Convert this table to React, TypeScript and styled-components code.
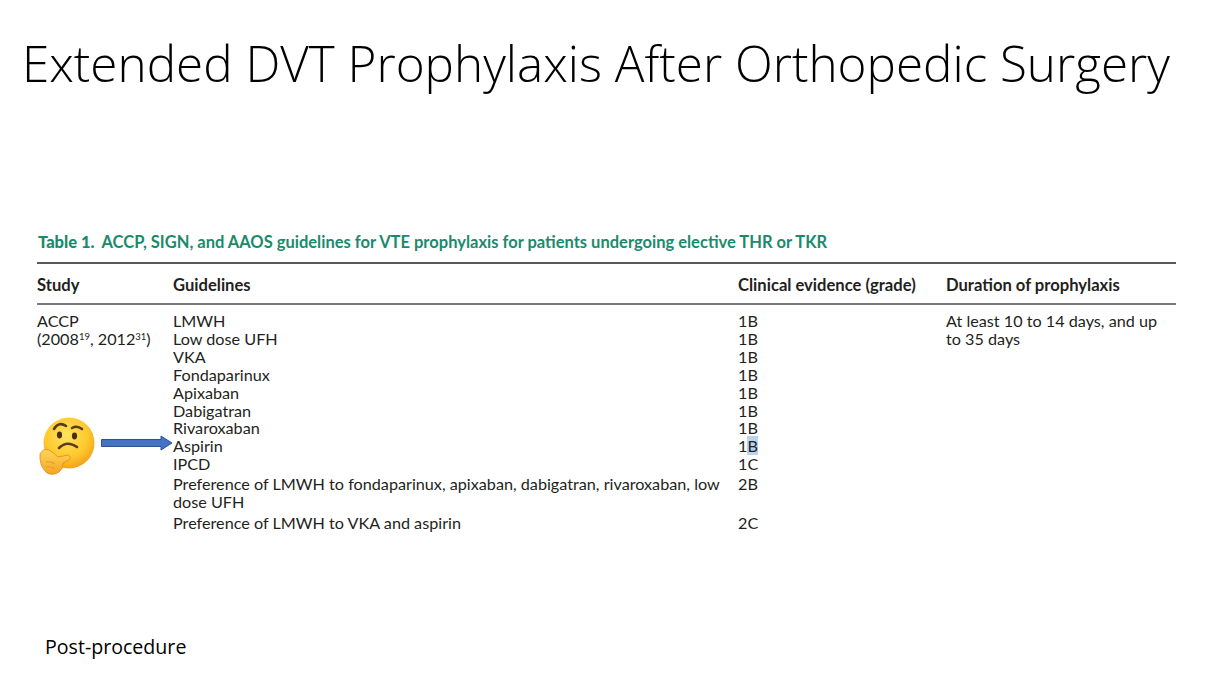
import React from "react";
import styled, { createGlobalStyle } from "styled-components";

const GlobalStyle = createGlobalStyle`
  html, body {
    margin: 0;
    padding: 0;
    background: #ffffff;
  }
`;

const Slide = styled.div`
  position: relative;
  width: 1210px;
  height: 681px;
  overflow: hidden;
  background: #ffffff;
  display: flex;
  flex-direction: column;
`;

const Title = styled.h1`
  margin: 33px 0 0 22px;
  font-family: "Open Sans", sans-serif;
  font-weight: 300;
  font-size: 49.4px;
  line-height: 60px;
  color: #000;
  white-space: nowrap;
`;

const TableBlock = styled.div`
  position: relative;
  margin: 139px 0 0 37px;
  width: 1139px;
  font-family: Lato, "Open Sans", sans-serif;
  color: #231f20;
`;

const Caption = styled.div`
  font-size: 16.5px;
  font-weight: 700;
  color: #1b8a6c;
  line-height: 20px;
  padding-left: 1px;
  margin-bottom: 10px;
  white-space: nowrap;
`;

const CaptionLabel = styled.span`
  font-weight: 900;
  margin-right: 7px;
`;

const Rule = styled.div<{ $color: string }>`
  height: 2px;
  background: ${(p) => p.$color};
`;

const Grid = styled.div`
  display: grid;
  grid-template-columns: 136px 565px 208px 1fr;
  font-size: 16.2px;
  line-height: 17.9px;
`;

const HeadCell = styled.div`
  font-weight: 700;
  font-size: 16.6px;
  line-height: 18px;
  padding: 12px 0 9px;
  white-space: nowrap;
`;

const Cell = styled.div<{ $col: number; $row: string; $gap?: number }>`
  grid-column: ${(p) => p.$col};
  grid-row: ${(p) => p.$row};
  padding-top: ${(p) => p.$gap ?? 0}px;
`;

const Body = styled(Grid)`
  padding-top: 7px;
`;

const Sup = styled.sup`
  font-size: 9.5px;
  vertical-align: 5px;
  line-height: 0;
`;

const Marker = styled.div`
  position: absolute;
  left: 0;
  top: 184px;
  display: flex;
  align-items: flex-start;
  gap: 4px;
`;

const ArrowBox = styled.div`
  margin-top: 19px;
  display: flex;
`;

const Footer = styled.div`
  margin: auto 0 21px 45px;
  font-family: "Open Sans", sans-serif;
  font-size: 19.6px;
  color: #000;
`;

const Picked = styled.span`
  background: #b9d3f0;
`;

const rows: { name: React.ReactNode; grade: React.ReactNode; gap?: number }[] = [
  { name: "LMWH", grade: "1B" },
  { name: "Low dose UFH", grade: "1B" },
  { name: "VKA", grade: "1B" },
  { name: "Fondaparinux", grade: "1B" },
  { name: "Apixaban", grade: "1B" },
  { name: "Dabigatran", grade: "1B" },
  { name: "Rivaroxaban", grade: "1B" },
  { name: "Aspirin", grade: <>1<Picked>B</Picked></> },
  { name: "IPCD", grade: "1C" },
  {
    name: "Preference of LMWH to fondaparinux, apixaban, dabigatran, rivaroxaban, low dose UFH",
    grade: "2B",
    gap: 2,
  },
  { name: "Preference of LMWH to VKA and aspirin", grade: "2C", gap: 3 },
];

const ThinkingFace = () => (
  <svg width="60" height="60" viewBox="0 0 60 60">
    <defs>
      <radialGradient id="face" cx="0.45" cy="0.35" r="0.7">
        <stop offset="0" stopColor="#ffe45c" />
        <stop offset="0.6" stopColor="#fdc92e" />
        <stop offset="1" stopColor="#f29b17" />
      </radialGradient>
      <linearGradient id="hand" x1="0" y1="0" x2="0" y2="1">
        <stop offset="0" stopColor="#ffd65a" />
        <stop offset="1" stopColor="#f5a524" />
      </linearGradient>
    </defs>
    <circle cx="32" cy="27" r="25.5" fill="url(#face)" />
    <path d="M17 13 Q22 5 29 10" stroke="#5b3a1e" strokeWidth="2.6" fill="none" strokeLinecap="round" />
    <path d="M35 12 Q40 9 45 13" stroke="#5b3a1e" strokeWidth="2.6" fill="none" strokeLinecap="round" />
    <ellipse cx="22.5" cy="19" rx="2.6" ry="3.4" fill="#4a2e17" />
    <ellipse cx="37.5" cy="20" rx="2.6" ry="3.4" fill="#4a2e17" />
    <path d="M22 32 Q30 24 40 31" stroke="#5b3a1e" strokeWidth="2.6" fill="none" strokeLinecap="round" />
    <path
      d="M3 38 Q2 50 10 57 Q16 60 22 56 Q27 52 26 47 L32 44 Q35 41 31 39 L21 41 Q16 36 12 34 Q6 32 3 38 Z"
      fill="url(#hand)"
      stroke="#e08a12"
      strokeWidth="0.8"
    />
    <path d="M9 46 Q14 45 18 48" stroke="#e99a24" strokeWidth="1.2" fill="none" />
    <path d="M9 51 Q14 50 18 53" stroke="#e99a24" strokeWidth="1.2" fill="none" />
  </svg>
);

const Arrow = () => (
  <svg width="72" height="16" viewBox="0 0 72 16">
    <path
      d="M0.5 4.5 H60 V1 L71 8 L60 15 V11.5 H0.5 Z"
      fill="#4472c4"
      stroke="#2f528f"
      strokeWidth="1"
    />
  </svg>
);

export default function App() {
  return (
    <Slide>
      <GlobalStyle />
      <Title>Extended DVT Prophylaxis After Orthopedic Surgery</Title>
      <TableBlock>
        <Caption>
          <CaptionLabel>Table 1.</CaptionLabel>ACCP, SIGN, and AAOS guidelines for VTE prophylaxis for patients
          undergoing elective THR or TKR
        </Caption>
        <Rule $color="#5a5a5a" />
        <Grid>
          <HeadCell>Study</HeadCell>
          <HeadCell>Guidelines</HeadCell>
          <HeadCell>Clinical evidence (grade)</HeadCell>
          <HeadCell>Duration of prophylaxis</HeadCell>
        </Grid>
        <Rule $color="#7a7a7a" />
        <Body>
          <Cell $col={1} $row="1 / span 2">
            ACCP
            <br />
            (2008<Sup>19</Sup>, 2012<Sup>31</Sup>)
          </Cell>
          {rows.map((r, i) => (
            <React.Fragment key={i}>
              <Cell $col={2} $row={String(i + 1)} $gap={r.gap}>
                {r.name}
              </Cell>
              <Cell $col={3} $row={String(i + 1)} $gap={r.gap}>
                {r.grade}
              </Cell>
            </React.Fragment>
          ))}
          <Cell $col={4} $row="1 / span 2">
            At least 10 to 14 days, and up
            <br />
            to 35 days
          </Cell>
        </Body>
        <Marker>
          <ThinkingFace />
          <ArrowBox>
            <Arrow />
          </ArrowBox>
        </Marker>
      </TableBlock>
      <Footer>Post-procedure</Footer>
    </Slide>
  );
}
